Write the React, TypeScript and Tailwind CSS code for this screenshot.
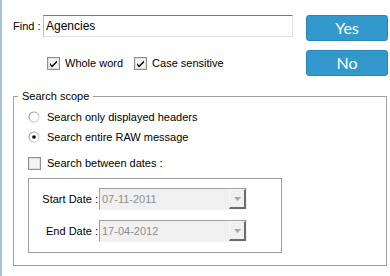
import React from "react";

const CheckBox = ({ checked }: { checked?: boolean }) => (
  <svg width="13" height="13" viewBox="0 0 13 13" className="shrink-0">
    <rect x="0.5" y="0.5" width="12" height="12" fill="#fff" stroke="#8e8f8f" />
    <rect x="1.5" y="1.5" width="10" height="10" fill="#f4f4f4" stroke="#e0e0e0" />
    {checked && <path d="M3 6 L5 8.5 L10 3.5 L10 5.5 L5 10.5 L3 8 Z" fill="#000" />}
  </svg>
);

const Radio = ({ checked }: { checked?: boolean }) => (
  <svg width="12" height="12" viewBox="0 0 12 12" className="shrink-0">
    <defs>
      <linearGradient id="rb" x1="0" y1="0" x2="1" y2="1">
        <stop offset="0" stopColor="#808080" />
        <stop offset="1" stopColor="#e6e6e6" />
      </linearGradient>
    </defs>
    <circle cx="6" cy="6" r="5.5" fill="url(#rb)" />
    <circle cx="6" cy="6" r="4.5" fill="#fff" />
    {checked && <circle cx="6" cy="6" r="1.8" fill="#000" />}
  </svg>
);

const DateCombo = ({ label, value }: { label: string; value: string }) => (
  <div className="flex items-center h-[22px]">
    <span className="w-[70px] text-right pr-[1px]">{label}</span>
    <div className="flex w-[148px] h-[22px] border border-t-[#a0a0a0] border-l-[#a0a0a0] border-r-[#f4f4f4] border-b-[#f4f4f4] bg-[#f0f0f0]">
      <span className="flex-1 pl-[2px] leading-[20px] text-[#8d8d8d]">{value}</span>
      <div className="w-[17px] h-[20px] border-r-2 border-b-2 border-[#6d6d6d] border-l border-t border-l-[#f8f8f8] border-t-[#f8f8f8] flex items-center justify-center">
        <svg width="7" height="4" viewBox="0 0 7 4">
          <path d="M0 0 H7 L3.5 4 Z" fill="#a9a9a9" />
        </svg>
      </div>
    </div>
  </div>
);

export default function App() {
  return (
    <div className="w-[390px] h-[276px] bg-white border-l-2 border-[#a6bfdc] text-[11px] text-black font-['Liberation_Sans',Arial,sans-serif] overflow-hidden">
      <div className="flex">
        <div className="flex-1">
          <div className="flex items-center mt-[15px] ml-[11px]">
            <span className="w-[30px]">Find :</span>
            <div className="w-[250px] h-[22px] border border-t-[#7a7a7a] border-l-[#bcbcbc] border-r-[#e3e3e3] border-b-[#e3e3e3] bg-white pl-[2px] leading-[20px] text-[12px]">
              Agencies
            </div>
          </div>
          <div className="flex items-center mt-[20px] ml-[45px] h-[13px]">
            <CheckBox checked />
            <span className="ml-[5px]">Whole word</span>
            <div className="ml-[11px]">
              <CheckBox checked />
            </div>
            <span className="ml-[5px]">Case sensitive</span>
          </div>
        </div>
        <div className="flex flex-col gap-[9px] mt-[15px] mr-[2px] font-['Lato',sans-serif] text-[16px] text-white">
          <div className="w-[82px] h-[26px] rounded-[3px] bg-[#3399cc] border border-[#2a86b6] flex items-center justify-center">
            Yes
          </div>
          <div className="w-[82px] h-[26px] rounded-[3px] bg-[#3399cc] border border-[#2a86b6] flex items-center justify-center">
            No
          </div>
        </div>
      </div>
      <fieldset className="ml-[11px] mt-[14px] w-[374px] h-[176px] border border-[#a0a0a0] pl-[14px]">
        <legend className="-ml-[10px] px-[4px] -mb-[1px] leading-[13px]">Search scope</legend>
        <div className="flex items-center mt-[9px] h-[12px]">
          <Radio />
          <span className="ml-[7px]">Search only displayed headers</span>
        </div>
        <div className="flex items-center mt-[8px] h-[12px]">
          <Radio checked />
          <span className="ml-[7px]">Search entire RAW message</span>
        </div>
        <div className="flex items-center mt-[14px] h-[13px]">
          <CheckBox />
          <span className="ml-[6px]">Search between dates :</span>
        </div>
        <div className="mt-[8px] w-[254px] h-[75px] border border-[#a0a0a0] pt-[9px] flex flex-col gap-[10px]">
          <DateCombo label="Start Date :" value="07-11-2011" />
          <DateCombo label="End Date :" value="17-04-2012" />
        </div>
      </fieldset>
    </div>
  );
}
